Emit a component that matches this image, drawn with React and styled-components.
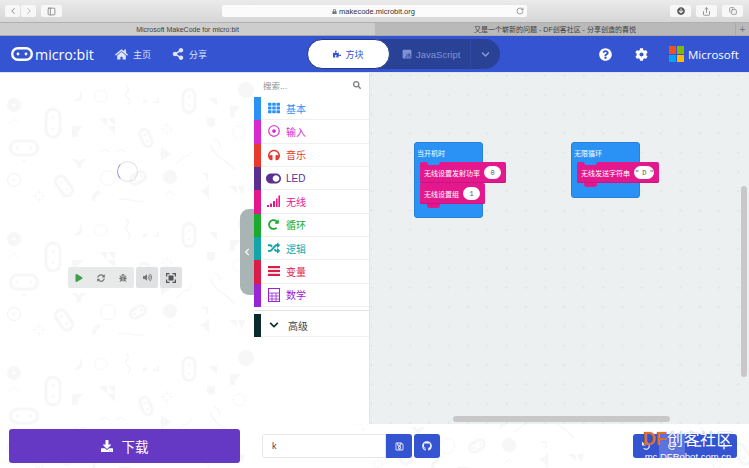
import styled, { createGlobalStyle } from 'styled-components';
import {
    FaHome, FaShareAlt, FaPuzzlePiece, FaQuestionCircle, FaCog, FaChevronDown, FaChevronLeft,
    FaSearch, FaTh, FaRegDotCircle, FaHeadphones, FaToggleOn, FaRedoAlt, FaRandom,
    FaDownload, FaRegSave, FaGithub, FaPlay, FaSyncAlt, FaBug, FaVolumeUp, FaUndo, FaRedo, FaMinus, FaPlus,
    FaLock, FaArrowCircleDown, FaJsSquare,
} from 'react-icons/fa';
import { ChevronLeft, ChevronRight, PanelLeft, RotateCw, Share, Copy } from 'lucide-react';

const CJK = `"Liberation Sans", "Noto Sans CJK SC", sans-serif`;
const BLUE = '#3454d1';
const PINK = '#e3188d';

const GlobalStyle = createGlobalStyle`
    html, body {
        margin: 0;
        padding: 0;
        background: #fff;
        overflow: hidden;
    }
    * {
        box-sizing: border-box;
    }
`;

const Page = styled.div`
    position: relative;
    width: 749px;
    height: 468px;
    display: flex;
    flex-direction: column;
    overflow: hidden;
    font-family: ${CJK};
`;

/* safari chrome */
const Toolbar = styled.div`
    height: 22px;
    display: flex;
    align-items: center;
    padding: 0 5px;
    background: linear-gradient(#ebebeb, #d6d6d6);
`;
const ChromeGroup = styled.div`
    display: flex;
    gap: ${(p) => p.$gap || 1}px;
    margin-right: ${(p) => p.$mr || 0}px;
`;
const ChromeButton = styled.div`
    width: ${(p) => p.$w || 21}px;
    height: 12px;
    display: flex;
    align-items: center;
    justify-content: center;
    border-radius: 2px;
    background: #f7f7f7;
    color: ${(p) => p.$color || '#777'};
`;
const Address = styled.div`
    position: relative;
    width: 305px;
    height: 12px;
    margin: 0 143px 0 160px;
    display: flex;
    align-items: center;
    justify-content: center;
    gap: 2px;
    border-radius: 2px;
    background: #fbfbfb;
    font-size: 7.5px;
    color: #333;
    padding-right: 2px;
    > svg:last-child {
        position: absolute;
        right: 3px;
        top: 2px;
        color: #777;
    }
`;
const TabBar = styled.div`
    height: 14px;
    display: flex;
    border-top: 1px solid #b0b0b0;
    border-bottom: 1px solid #a9a9a9;
    background: #b9b9b9;
`;
const Tab = styled.div`
    flex: ${(p) => (p.$active ? '0 0 375px' : '1')};
    display: flex;
    align-items: center;
    justify-content: center;
    font-size: 7px;
    color: #3d3d3d;
    background: ${(p) => (p.$active ? '#cdcdcd' : '#b9b9b9')};
`;
const NewTab = styled.div`
    width: 14px;
    display: flex;
    align-items: center;
    justify-content: center;
    border-left: 1px solid #a9a9a9;
    color: #777;
    font-size: 10px;
`;

/* makecode nav */
const Nav = styled.div`
    position: relative;
    z-index: 1;
    height: 37px;
    display: flex;
    align-items: center;
    padding-left: 11px;
    background: ${BLUE};
    color: #fff;
    border-bottom: 1px solid #dfe5f5;
    > * {
        flex-shrink: 0;
    }
`;
const Brand = styled.div`
    display: flex;
    align-items: center;
    gap: 2px;
    width: 104px;
    font-family: "Open Sans", sans-serif;
    font-size: 14.2px;
`;
const NavItem = styled.div`
    display: flex;
    align-items: center;
    gap: 5px;
    width: ${(p) => p.$w}px;
    font-size: 9px;
    color: #dfe5f8;
`;
const Toggle = styled.div`
    width: 193px;
    height: 30px;
    display: flex;
    align-items: center;
    border-radius: 15px;
    background: #2a4295;
`;
const ToggleActive = styled.div`
    width: 83px;
    height: 100%;
    display: flex;
    align-items: center;
    justify-content: center;
    gap: 4px;
    border-radius: 15px;
    background: #fff;
    border: 1px solid #243a88;
    color: ${BLUE};
    font-size: 9px;
`;
const ToggleOption = styled.div`
    width: 81px;
    height: 100%;
    display: flex;
    align-items: center;
    gap: 4px;
    padding-left: 12px;
    border-right: 1px solid #2f4aa6;
    color: #7f92d4;
    font-size: 9.5px;
`;
const ToggleMore = styled.div`
    flex: 1;
    display: flex;
    justify-content: center;
    color: #8a9bd8;
`;
const NavRight = styled.div`
    display: flex;
    align-items: center;
    margin-left: 87px;
`;
const NavIcon = styled.div`
    width: 36px;
    display: flex;
    justify-content: center;
`;
const MsLogo = styled.div`
    display: grid;
    grid-template-columns: 7px 7px;
    grid-auto-rows: 7.5px;
    gap: 1px;
    margin: 0 4px 0 10px;
`;
const MsSquare = styled.span`
    background: ${(p) => p.$color};
`;
const MsText = styled.span`
    font-family: "Open Sans", sans-serif;
    font-size: 11.5px;
`;

/* main area */
const Body = styled.div`
    position: relative;
    z-index: 1;
    flex: 1;
    min-height: 0;
    display: flex;
`;
const Simulator = styled.div`
    position: relative;
    width: 254px;
    display: flex;
    flex-direction: column;
    align-items: center;
    padding: 88px 3px 0 0;
`;
const Spinner = styled.div`
    width: 21px;
    height: 21px;
    margin-right: -3px;
    border-radius: 50%;
    border: 1.5px solid #e2e2e6;
    border-left-color: #a78fdc;
`;
const SimBar = styled.div`
    margin-top: 85px;
    margin-left: -1px;
    display: flex;
    gap: 2px;
`;
const SimGroup = styled.div`
    height: 21px;
    display: flex;
    align-items: center;
    border-radius: 2px;
    background: ${(p) => (p.$light ? '#e8e9e9' : '#e0e1e2')};
`;
const SimButton = styled.div`
    width: ${(p) => p.$w || 22}px;
    display: flex;
    justify-content: center;
    color: ${(p) => p.$color || '#767676'};
`;
const Collapse = styled.div`
    position: absolute;
    right: 0;
    top: 136px;
    width: 14px;
    height: 86px;
    display: flex;
    align-items: center;
    justify-content: center;
    border-radius: 9px 0 0 9px;
    background: #a9b5b5;
    color: #fff;
`;

const Toolbox = styled.div`
    width: 116px;
    background: #fff;
    border-right: 1px solid #e0e4e5;
`;
const SearchRow = styled.div`
    height: 24px;
    display: flex;
    align-items: center;
    justify-content: space-between;
    padding: 0 8px 0 9px;
    font-size: 8.5px;
    color: #8f8f8f;
`;
const Category = styled.div`
    height: 23.33px;
    display: flex;
    align-items: center;
    border-bottom: 1px solid #efefef;
    color: ${(p) => p.$color};
    font-size: 10px;
    &::before {
        content: '';
        width: 7px;
        align-self: stretch;
        margin-bottom: -1px;
        background: ${(p) => p.$color};
    }
`;
const CategoryIcon = styled.span`
    width: 25px;
    display: flex;
    justify-content: center;
`;
const CategoryLabel = styled.span`
    margin-left: 2px;
    color: #444;
`;
const Separator = styled.div`
    height: 4px;
    border-bottom: 1px solid #e4e4e4;
    margin-bottom: 3px;
`;

const Workspace = styled.div`
    position: relative;
    flex: 1;
    background: #ecf0f1;
    overflow: hidden;
`;
const Dots = styled.svg`
    position: absolute;
    inset: 0;
    width: 100%;
    height: 100%;
`;
const HatBlock = styled.div`
    position: absolute;
    left: ${(p) => p.$x}px;
    top: ${(p) => p.$y}px;
    width: ${(p) => p.$w}px;
    height: ${(p) => p.$h}px;
    padding: 6px 0 0 5px;
    border-radius: 3px;
    background: #2b92f5;
    border: 1px solid #2680dc;
    color: #fff;
    font-size: 7px;
`;
const HatTitle = styled.div`
    height: 13px;
    line-height: 9px;
    margin-left: -3px;
`;
const Stack = styled.div`
    position: relative;
    width: max-content;
    height: 21px;
    display: flex;
    align-items: center;
    gap: 4px;
    padding: 0 5px 0 4px;
    border-radius: 2px;
    background: ${PINK};
    box-shadow: inset 0 -1px 0 #c9157d;
    color: #fff;
    font-size: 7px;
    &::before {
        content: '';
        position: absolute;
        left: 7px;
        top: 0;
        width: 13px;
        height: 3px;
        border-radius: 0 0 3px 3px;
        background: ${(p) => (p.$first ? '#2b92f5' : PINK)};
    }
    &::after {
        content: '';
        position: absolute;
        z-index: 1;
        left: 7px;
        bottom: -4px;
        width: 13px;
        height: 4px;
        border-radius: 0 0 3px 3px;
        background: ${PINK};
    }
`;
const Value = styled.span`
    min-width: ${(p) => p.$w || 17}px;
    height: 13px;
    display: flex;
    align-items: center;
    justify-content: center;
    border-radius: 7px;
    background: #fff;
    color: #555;
    font-family: "Liberation Mono", monospace;
    font-size: 7px;
    letter-spacing: ${(p) => p.$tight ? '-0.6px' : '0'};
`;
const ScrollThumb = styled.div`
    position: absolute;
    border-radius: 3px;
    background: #c8c8c8;
    ${(p) => p.$css}
`;

/* footer */
const Footer = styled.div`
    position: relative;
    z-index: 1;
    height: 44px;
    display: flex;
    align-items: center;
    padding: 0 12px 0 9px;
`;
const Download = styled.div`
    width: 231px;
    height: 34px;
    display: flex;
    align-items: center;
    justify-content: center;
    gap: 9px;
    border-radius: 3px;
    background: #6639c4;
    color: #fff;
    font-size: 13.5px;
`;
const NameInput = styled.div`
    width: 124px;
    height: 24px;
    margin-left: 22px;
    display: flex;
    align-items: center;
    padding-left: 9px;
    border: 1px solid #e6e6e6;
    border-radius: 3px 0 0 3px;
    background: #fff;
    color: #444;
    font-size: 9px;
`;
const BlueButton = styled.div`
    width: ${(p) => p.$w || 26}px;
    height: 24px;
    display: flex;
    align-items: center;
    justify-content: center;
    margin-right: ${(p) => p.$mr || 0}px;
    border-radius: ${(p) => p.$radius || '0'};
    background: ${(p) => (p.$light ? '#5a74db' : BLUE)};
    color: #eef1fb;
`;
const EditGroup = styled.div`
    display: flex;
    margin-left: auto;
    border-radius: 3px;
    overflow: hidden;
`;

/* site watermark lying over the footer */
const Watermark = styled.div`
    position: absolute;
    z-index: 2;
    right: 13px;
    bottom: 7px;
    width: 96px;
    color: #fff;
    text-align: center;
`;
const MarkTitle = styled.div`
    font-size: 16px;
    line-height: 18px;
    white-space: nowrap;
    letter-spacing: 0.5px;
    text-shadow: 0 0 1px #3454d1;
    span {
        color: #df6f2d;
        font-size: 18px;
        font-weight: bold;
        letter-spacing: 0;
    }
`;
const MarkSub = styled.div`
    margin-top: 3px;
    font-size: 9.5px;
    line-height: 9px;
    white-space: nowrap;
`;

const Backdrop = styled.svg`
    position: absolute;
    left: 0;
    top: 73px;
    width: 749px;
    height: 395px;
    opacity: 0.65;
`;

const Pill = ({ x, y, w, h, r = 0 }) => (
    <g transform={`translate(${x} ${y}) rotate(${r})`}>
        <rect x={-w / 2} y={-h / 2} width={w} height={h} rx={Math.min(w, h) / 2} fill="none" stroke="#f3f3f3" strokeWidth="3" />
        <circle cx={w > h ? -w / 4 : 0} cy={w > h ? 0 : -h / 5} r="1.4" fill="#f3f3f3" />
        <circle cx={w > h ? w / 4 : 0} cy={w > h ? 0 : h / 5} r="1.4" fill="#f3f3f3" />
    </g>
);

const Tile = () => (
    <g fill="#f3f3f3" stroke="none">
        <circle cx="14" cy="32" r="7" />
        <circle cx="14" cy="32" r="1.5" fill="#fff" />
        <path d="M9 51l5-5 5 5" fill="none" stroke="#f3f3f3" />
        <Pill x={53} y={50} w={14} h={28} />
        <path d="M80 17q2 8-7 11q7 2 9-3q1-5-2-8z" />
        <circle cx="101" cy="23" r="6" fill="none" stroke="#f1f1f1" strokeWidth="1.5" strokeDasharray="1.5 1.5" />
        <path d="M126 12q4 4 1 7t1 6t0 7" fill="none" stroke="#f0f0f0" strokeWidth="1.2" />
        <path d="M143 27v3h4v-4zM153 30h6v-5h-2v3h-4z" />
        <Pill x={189} y={28} w={12} h={23} />
        <path d="M209 25h8v8z" />
        <circle cx="246" cy="17" r="8" />
        <path d="M230 33h11l-6 6v5h-5z" />
        <path d="M72 53h11l-5 6v5h-6z" />
        <path d="M99 45h8v8zM108 45h7v8zM107 53h8v8z" />
        <Pill x={146} y={65} w={9} h={18} r={-22} />
        <path d="M167 50v4M167 58v4M161 56h4M169 56h4M163 52l2 2M169 58l2 2M171 52l-2 2M165 58l-2 2" stroke="#f0f0f0" fill="none" />
        <path d="M207 45h8v6q-1 3-4 3t-4-3z" />
        <circle cx="239" cy="59" r="6" fill="none" stroke="#f1f1f1" strokeWidth="1.5" strokeDasharray="1.5 1.5" />
        <Pill x={24} y={75} w={27} h={14} />
        <circle cx="24" cy="88" r="1.5" />
        <path d="M101 79q4-5 8 0M117 79q4-5 8 0" fill="none" stroke="#f0f0f0" strokeWidth="1.2" />
        <path d="M161 74l10 7-10 7v-5l-1-2 1-2z" />
        <path d="M175 91l6-4 2-3 5-1 4-5" fill="none" stroke="#f0f0f0" />
        <path d="M214 66q6 1 6 8M210 72q6 12 14 15q5 4 11 10" fill="none" stroke="#f0f0f0" strokeWidth="1.2" />
        <path d="M72 86h4l3 2 3-2h4l-5 5v4h-4v-4z" />
        <circle cx="14" cy="107" r="6.5" fill="none" stroke="#f1f1f1" strokeWidth="1.3" />
        <circle cx="14" cy="107" r="1.5" />
        <Pill x={64} y={113} w={11} h={22} r={-35} />
        <circle cx="108" cy="105" r="7.5" fill="none" stroke="#f1f1f1" />
        <Pill x={138} y={105} w={16} h={9} r={-30} />
        <circle cx="170" cy="104" r="7" />
        <path d="M202 100h6v7h-2v-5h-4z" />
        <path d="M200 118l6-3 3-4v16l-3-5z" />
        <path d="M229 113h7l2 8zM238 113h7l-3 9z" />
        <path d="M39 117v4M39 125v4M33 123h4M41 123h4M35 119l2 2M41 125l2 2M43 119l-2 2M37 125l-2 2" stroke="#f0f0f0" fill="none" />
        <path d="M100 117q-8 1-8 11h3q0-6 5-7z" />
        <path d="M118 127q6-2 12 0t14 1" fill="none" stroke="#f0f0f0" />
        <path d="M166 122l4-4 4 4" fill="none" stroke="#f0f0f0" />
    </g>
);

const categories = [
    { name: '基本', color: '#2b92f5', icon: <FaTh size={12} /> },
    { name: '输入', color: '#d62ad0', icon: <FaRegDotCircle size={12} /> },
    { name: '音乐', color: '#e63a2e', icon: <FaHeadphones size={12} /> },
    { name: 'LED', color: '#5c3091', icon: <FaToggleOn size={15} /> },
    { name: '无线', color: '#e3188d', icon: <svg width="13" height="12" viewBox="0 0 13 12" fill="currentColor"><rect x="0" y="10" width="2" height="2" /><rect x="3" y="8.5" width="2" height="3.5" /><rect x="6" y="6" width="2" height="6" /><rect x="9" y="3.5" width="1.6" height="8.5" /><rect x="11.4" y="0.5" width="1.6" height="11.5" /></svg> },
    { name: '循环', color: '#1aab2c', icon: <FaRedoAlt size={11} /> },
    { name: '逻辑', color: '#14a5a8', icon: <FaRandom size={12} /> },
    { name: '变量', color: '#dc1c48', icon: <svg width="12" height="10" viewBox="0 0 12 10" fill="currentColor"><rect width="12" height="2.2" /><rect y="3.9" width="12" height="2.2" /><rect y="7.8" width="12" height="2.2" /></svg> },
    { name: '数学', color: '#9a24d3', icon: <svg width="12" height="14" viewBox="0 0 12 14" fill="none" stroke="currentColor"><rect x="0.5" y="0.5" width="11" height="13" /><path d="M0.5 5h11M0.5 8h11M0.5 11h11M4 5v8.500M8 5v8.500" strokeWidth="0.8" /></svg> },
];

export default function App() {
    return (
        <Page>
            <GlobalStyle />
            <Backdrop aria-hidden="true">
                <defs>
                    <pattern id="sim-bg" width="339" height="134" patternUnits="userSpaceOnUse">
                        <Tile />
                    </pattern>
                </defs>
                <rect width="749" height="395" fill="url(#sim-bg)" />
            </Backdrop>

            <Toolbar>
                <ChromeGroup $mr={5}>
                    <ChromeButton $w={15}><ChevronLeft size={10} /></ChromeButton>
                    <ChromeButton $w={15} $color="#aaa"><ChevronRight size={10} /></ChromeButton>
                </ChromeGroup>
                <ChromeButton><PanelLeft size={9} /></ChromeButton>
                <Address>
                    <FaLock size={5} color="#777" />
                    makecode.microbit.org
                    <RotateCw size={8} />
                </Address>
                <ChromeGroup $gap={5}>
                    <ChromeButton $color="#555"><FaArrowCircleDown size={8} /></ChromeButton>
                    <ChromeButton><Share size={9} /></ChromeButton>
                    <ChromeButton><Copy size={8} /></ChromeButton>
                </ChromeGroup>
            </Toolbar>
            <TabBar>
                <Tab $active>Microsoft MakeCode for micro:bit</Tab>
                <Tab>又是一个崭新的问题 - DF创客社区 - 分享创造的喜悦</Tab>
                <NewTab>+</NewTab>
            </TabBar>

            <Nav>
                <Brand>
                    <svg width="22" height="14" viewBox="0 0 22 14">
                        <rect x="1.2" y="1.2" width="19.6" height="11.6" rx="5.8" fill="none" stroke="#fff" strokeWidth="2.4" />
                        <circle cx="7" cy="7" r="1.4" fill="#fff" />
                        <circle cx="15" cy="7" r="1.4" fill="#fff" />
                    </svg>
                    micro:bit
                </Brand>
                <NavItem $w={57}><FaHome size={13} />主页</NavItem>
                <NavItem $w={135}><FaShareAlt size={12} />分享</NavItem>
                <Toggle>
                    <ToggleActive><FaPuzzlePiece size={8} />方块</ToggleActive>
                    <ToggleOption><FaJsSquare size={10} />JavaScript</ToggleOption>
                    <ToggleMore><FaChevronDown size={9} /></ToggleMore>
                </Toggle>
                <NavRight>
                    <NavIcon><FaQuestionCircle size={13} /></NavIcon>
                    <NavIcon><FaCog size={13} /></NavIcon>
                    <MsLogo>
                        <MsSquare $color="#f25022" />
                        <MsSquare $color="#7fba00" />
                        <MsSquare $color="#00a4ef" />
                        <MsSquare $color="#ffb900" />
                    </MsLogo>
                    <MsText>Microsoft</MsText>
                </NavRight>
            </Nav>

            <Body>
                <Simulator>
                    <Spinner />
                    <SimBar>
                        <SimGroup $light>
                            <SimButton $color="#3f9f4c"><FaPlay size={8} /></SimButton>
                            <SimButton><FaSyncAlt size={8} /></SimButton>
                            <SimButton><FaBug size={8} /></SimButton>
                        </SimGroup>
                        <SimGroup><SimButton><FaVolumeUp size={9} /></SimButton></SimGroup>
                        <SimGroup>
                            <SimButton $color="#555">
                                <svg width="10" height="10" viewBox="0 0 10 10" fill="currentColor">
                                    <path d="M0 0h3.5v1.2H1.2v2.3H0zM6.5 0H10v3.5H8.8V1.2H6.5zM0 6.5h1.2v2.3h2.3V10H0zM8.8 6.5H10V10H6.5V8.8h2.3z" />
                                    <rect x="2.500" y="2.500" width="5" height="5" />
                                </svg>
                            </SimButton>
                        </SimGroup>
                    </SimBar>
                    <Collapse><FaChevronLeft size={8} /></Collapse>
                </Simulator>

                <Toolbox>
                    <SearchRow>搜索...<FaSearch size={8} color="#777" /></SearchRow>
                    {categories.map((c) => (
                        <Category key={c.name} $color={c.color}>
                            <CategoryIcon>{c.icon}</CategoryIcon>
                            {c.name}
                        </Category>
                    ))}
                    <Separator />
                    <Category $color="#0b2a2e">
                        <CategoryIcon><FaChevronDown size={10} /></CategoryIcon>
                        <CategoryLabel>高级</CategoryLabel>
                    </Category>
                </Toolbox>

                <Workspace>
                    <Dots aria-hidden="true">
                        <defs>
                            <pattern id="grid" width="19.3" height="19.3" x="0" y="1" patternUnits="userSpaceOnUse">
                                <path d="M0 1.5h3M1.5 0v3" stroke="#e1e5e6" strokeWidth="0.8" />
                            </pattern>
                        </defs>
                        <rect width="100%" height="100%" fill="url(#grid)" />
                    </Dots>
                    <HatBlock $x={44} $y={69} $w={69} $h={76}>
                        <HatTitle>当开机时</HatTitle>
                        <Stack $first>无线设置发射功率<Value>0</Value></Stack>
                        <Stack>无线设置组<Value>1</Value></Stack>
                    </HatBlock>
                    <HatBlock $x={201} $y={69} $w={69} $h={56}>
                        <HatTitle>无限循环</HatTitle>
                        <Stack $first>无线发送字符串<Value $w={20} $tight>" D "</Value></Stack>
                    </HatBlock>
                    <ScrollThumb $css="left: 83px; right: 79px; top: 343px; height: 6px;" />
                    <ScrollThumb $css="right: 2px; top: 113px; width: 6px; height: 191px;" />
                </Workspace>
            </Body>

            <Footer>
                <Download><FaDownload size={12} />下载</Download>
                <NameInput>k</NameInput>
                <BlueButton $mr={2} $radius="0 3px 3px 0"><FaRegSave size={9} /></BlueButton>
                <BlueButton $radius="3px"><FaGithub size={10} /></BlueButton>
                <EditGroup>
                    <BlueButton><FaUndo size={8} /></BlueButton>
                    <BlueButton $light><FaRedo size={8} /></BlueButton>
                    <BlueButton><FaMinus size={8} /></BlueButton>
                    <BlueButton><FaPlus size={8} /></BlueButton>
                </EditGroup>
            </Footer>
            <Watermark>
                <MarkTitle><span>DF</span>创客社区</MarkTitle>
                <MarkSub>mc.DFRobot.com.cn</MarkSub>
            </Watermark>
        </Page>
    );
}
